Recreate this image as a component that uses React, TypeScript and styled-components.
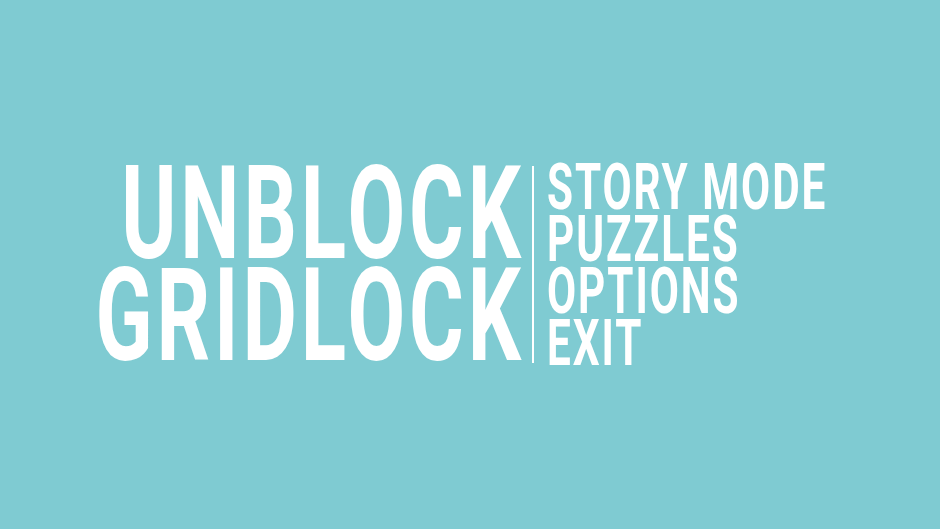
import React from "react";
import styled, { createGlobalStyle } from "styled-components";

const Global = createGlobalStyle`
  html, body { margin: 0; padding: 0; }
  body { background: #7fcbd2; }
  #root { width: 940px; height: 529px; }
`;

const Screen = styled.div`
  width: 940px;
  height: 529px;
  background: #7fcbd2;
  display: flex;
  align-items: center;
  justify-content: center;
  overflow: hidden;
  font-family: Roboto, "Liberation Sans", sans-serif;
  color: #ffffff;
`;

const Group = styled.div`
  display: flex;
  align-items: center;
  margin-left: 3px;
`;

const TitleColumn = styled.div`
  width: 419px;
  display: flex;
  flex-direction: column;
  align-items: flex-end;
`;

const TitleLine = styled.div`
  display: flex;
  justify-content: flex-end;
  width: 419px;
  height: 102px;
  line-height: 102px;
  font-size: 130px;
  font-weight: 700;
  letter-spacing: 6px;
  white-space: nowrap;
`;

const Scaled = styled.span<{ $sx: number; $origin: string }>`
  display: inline-block;
  transform: scaleX(${(p) => p.$sx});
  transform-origin: ${(p) => p.$origin} center;
`;

const Divider = styled.div`
  width: 2px;
  height: 197px;
  background: #ffffff;
  margin: 0 13px 0 7px;
`;

const Menu = styled.div`
  width: 290px;
  display: flex;
  flex-direction: column;
`;

const MenuItem = styled.div`
  height: 52px;
  line-height: 52px;
  font-size: 65px;
  font-weight: 700;
  letter-spacing: 3px;
  white-space: nowrap;
  cursor: pointer;
`;

export default function App() {
  return (
    <>
      <Global />
      <Screen>
        <Group>
          <TitleColumn>
            <TitleLine>
              <Scaled $sx={0.645} $origin="right">UNBLOCK</Scaled>
            </TitleLine>
            <TitleLine>
              <Scaled $sx={0.645} $origin="right">GRIDLOCK</Scaled>
            </TitleLine>
          </TitleColumn>
          <Divider />
          <Menu>
            {["STORY MODE", "PUZZLES", "OPTIONS", "EXIT"].map((t) => (
              <MenuItem key={t}>
                <Scaled $sx={0.65} $origin="left">{t}</Scaled>
              </MenuItem>
            ))}
          </Menu>
        </Group>
      </Screen>
    </>
  );
}
